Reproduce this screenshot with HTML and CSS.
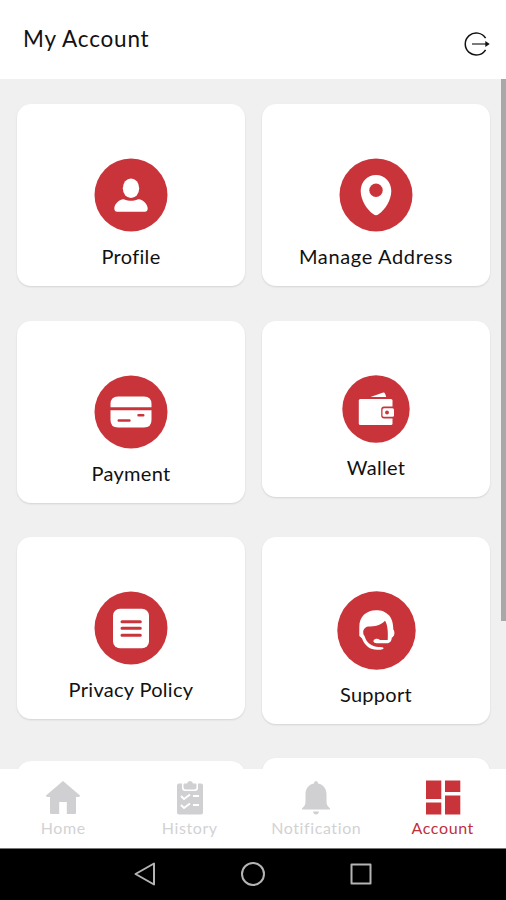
FILE: index.html
```html
<!DOCTYPE html>
<html lang="en">
<head>
  <meta charset="UTF-8">
  <meta name="viewport" content="width=device-width, initial-scale=1">
  <title>My Account</title>
  <link rel="stylesheet" href="styles.css">
</head>
<body>
  <header class="header">
    <h1>My Account</h1>
    <svg class="logout" width="28" height="28" viewBox="0 0 28 28">
      <path d="M22.6 8.2A11 11 0 1 0 22.6 19.8" fill="none" stroke="#111" stroke-width="1.5"/>
      <path d="M9 14H24" stroke="#333" stroke-width="1.3"/>
      <path d="M22.3 11L26.7 14L22.3 17Z" fill="#111"/>
    </svg>
  </header>

  <main class="content">
    <div class="grid">
      <div class="card">
        <svg width="74" height="74" viewBox="0 0 74 74">
          <circle class="disc" cx="37" cy="37" r="36.5"/>
          <ellipse cx="37" cy="30.2" rx="8.2" ry="9.8"/>
          <path d="M28.8 41.2C31 41 31.5 42.8 37 42.8S43 41 45.2 41.2C50 42.5 53.3 46 53.7 50.3Q53.7 53.8 50.7 53.8H23.3Q20.3 53.8 20.3 50.3C20.7 46 24 42.5 28.8 41.2Z"/>
        </svg>
        <span>Profile</span>
      </div>
      <div class="card">
        <svg width="74" height="74" viewBox="0 0 74 74">
          <circle class="disc" cx="37" cy="37" r="36.5"/>
          <path d="M37 17C28 17 21.7 24 21.7 33C21.7 42 28 52 34.5 56.3Q37 58 39.5 56.3C46 52 52.3 42 52.3 33C52.3 24 46 17 37 17Z"/>
          <circle class="disc" cx="37" cy="32.3" r="6.7"/>
        </svg>
        <span class="long">Manage Address</span>
      </div>

      <div class="card">
        <svg width="74" height="74" viewBox="0 0 74 74">
          <circle class="disc" cx="37" cy="37" r="36.5"/>
          <path d="M16.5 32.2V29Q16.5 21.5 24 21.5H50Q57.5 21.5 57.5 29V32.2Z"/>
          <path d="M16.5 35.3H57.5V45Q57.5 52.5 50 52.5H24Q16.5 52.5 16.5 45Z"/>
          <path class="line" d="M24.7 45.5H35.5M44.5 40.2H49.3"/>
        </svg>
        <span>Payment</span>
      </div>
      <div class="card">
        <svg width="68" height="68" viewBox="0 0 68 68">
          <circle class="disc" cx="34" cy="34" r="33.7"/>
          <path d="M28.5 22L40.5 17.7Q42.5 17 43.2 19L44.2 22Z"/>
          <rect x="16.8" y="24" width="33.7" height="26" rx="1.5"/>
          <path class="disc" d="M42 31.5H53V43.5H42Q39.2 43.5 39.2 40.5V34.5Q39.2 31.5 42 31.5Z"/>
          <rect x="40.5" y="33.2" width="11.5" height="8.6" rx="1.5"/>
          <circle class="disc" cx="45" cy="37.5" r="1.9"/>
        </svg>
        <span>Wallet</span>
      </div>

      <div class="card">
        <svg width="74" height="74" viewBox="0 0 74 74">
          <circle class="disc" cx="37" cy="37" r="36.5"/>
          <rect x="19" y="17.7" width="36" height="39.5" rx="7"/>
          <path class="line wide" d="M28 30.7H46.3M28 37.3H46.3M28 44.2H46.3"/>
        </svg>
        <span>Privacy Policy</span>
      </div>
      <div class="card">
        <svg width="79" height="79" viewBox="0 0 79 79">
          <circle class="disc" cx="39.5" cy="39.5" r="39.2"/>
          <path d="M39 19.3C29 19.3 22.3 26 22.3 36V45Q24 46 25 47.500C28 55 33 58.800 40 58.800C43.500 58.800 46.500 58.300 46.500 57.200C46.500 56 44.500 56.200 42 56C34 55.500 29.500 51.500 27.500 45Q25.800 43.500 26.200 40Q27.500 36 31 35.500C38 35.500 43 34.500 48 29.700C50.500 33 51.300 41 50.700 49H43Q41.500 47.600 39 47.800Q36.300 48.300 36.300 50.300Q37 52.500 40 52.300H50C53 52.300 54.500 50 54.800 46.800C58 45 58 40.500 56.300 38.500C56.300 32 54.500 26 51 23.500C48 20.800 45 19.300 39 19.300Z"/>
        </svg>
        <span>Support</span>
      </div>

      <div class="card low"></div>
      <div class="card"></div>
    </div>
    <div class="scrollbar"></div>
  </main>

  <nav class="tabs">
    <a class="tab">
      <svg width="36" height="36" viewBox="0 0 36 36">
        <path d="M18 1L35 15.5Q35 17.5 32 17H31V33Q31 34 30 34H21.8V22H14.2V34H6Q5 34 5 33V17H4Q1 17.5 1 15.5Z"/>
      </svg>
      <span>Home</span>
    </a>
    <a class="tab">
      <svg width="36" height="36" viewBox="0 0 36 36">
        <path d="M7 3.5H10V8Q10 11 13 11H23Q26 11 26 8V3.5H29Q31 3.5 31 5.5V32.5Q31 34.5 29 34.5H7Q5 34.5 5 32.5V5.5Q5 3.5 7 3.5Z"/>
        <path d="M11.5 4.5Q11.5 3.5 12.5 3.5H15Q15.5 1 18 1T21 3.5H23.5Q24.5 3.5 24.5 4.5V7Q24.5 9.500 22 9.500H14Q11.500 9.500 11.500 7Z"/>
        <path class="check" d="M9 16L12 19L18 14.5M21 16H27M9 25L12 28L18 23.5M21 25H27"/>
      </svg>
      <span>History</span>
    </a>
    <a class="tab">
      <svg width="36" height="36" viewBox="0 0 36 36">
        <path d="M18 1Q20 1 20 3.5C25.5 4.5 28.5 9 28.5 14V22C28.5 25 30 26.5 32 28.5V29.5H4V28.5C6 26.5 7.5 25 7.5 22V14C7.5 9 10.5 4.5 16 3.5Q16 1 18 1ZM15 31.5H21Q20.5 34.5 18 34.5T15 31.5Z"/>
      </svg>
      <span>Notification</span>
    </a>
    <a class="tab active">
      <svg width="36" height="36" viewBox="0 0 36 36">
        <path d="M1 0.5H16.3V19H1ZM20 0.5H35.3V12H20ZM1 22.5H16.3V34.5H1ZM20 15.5H35.3V34.5H20Z"/>
      </svg>
      <span>Account</span>
    </a>
  </nav>

  <footer class="system-bar">
    <svg width="24" height="26" viewBox="0 0 24 26"><path d="M21 2.5V23.5L2.5 13Z"/></svg>
    <svg width="24" height="26" viewBox="0 0 24 26"><circle cx="12" cy="13" r="11"/></svg>
    <svg width="24" height="26" viewBox="0 0 24 26"><rect x="2.5" y="3.5" width="19" height="19"/></svg>
  </footer>
</body>
</html>
```

FILE: styles.css
```css
* {
  box-sizing: border-box;
}
body {
  margin: 0;
  height: 900px;
  display: flex;
  flex-direction: column;
  overflow: hidden;
  background: #fff;
  color: #111;
  font-family: Lato, "Open Sans", sans-serif;
}
svg {
  display: block;
  flex: none;
}
.header {
  height: 79px;
  flex: none;
  display: flex;
  justify-content: space-between;
  padding: 26px 15px 0 23px;
}
.header h1 {
  margin: 0;
  font-size: 22.5px;
  line-height: 26px;
  font-weight: 400;
  letter-spacing: 0.8px;
}
.logout {
  margin-top: 4px;
}
.content {
  position: relative;
  height: 690px;
  flex: none;
  overflow: hidden;
  background: #f0f0f0;
}
.grid {
  display: grid;
  grid-template-columns: 228px 228px;
  grid-template-rows: 183px 182px 187px 183px;
  column-gap: 17px;
  row-gap: 34px;
  align-items: start;
  padding: 25px 17px;
}
.card {
  display: flex;
  flex-direction: column;
  align-items: center;
  min-height: 60px;
  padding: 54px 0 16px;
  border-radius: 14px;
  background: #fff;
  box-shadow: 0 1px 2px rgba(0, 0, 0, 0.12);
}
.card.low {
  margin-top: 3px;
}
.card svg {
  fill: #fff;
}
.card .disc {
  fill: #c9343b;
}
.card .line {
  fill: none;
  stroke: #c9343b;
  stroke-width: 2.4;
  stroke-linecap: round;
}
.card .wide {
  stroke-width: 3;
}
.card span {
  margin-top: 11px;
  margin-bottom: 1px;
  font-size: 20px;
  line-height: 26px;
  letter-spacing: 0.3px;
}
.card .long {
  letter-spacing: 0.65px;
}
.scrollbar {
  position: absolute;
  top: 0;
  right: 0;
  width: 5px;
  height: 542px;
  background: #a8a8a8;
}
.tabs {
  height: 79px;
  flex: none;
  display: flex;
  padding-top: 11px;
  background: #fff;
}
.tab {
  flex: 1;
  display: flex;
  flex-direction: column;
  align-items: center;
  color: #d2d2d4;
  fill: #d0d0d2;
}
.tab span {
  margin-top: 2px;
  font-size: 16px;
  line-height: 20px;
  letter-spacing: 0.6px;
}
.tab .check {
  fill: none;
  stroke: #fff;
  stroke-width: 2;
}
.tab.active {
  color: #c0303c;
  fill: #c9343b;
}
.system-bar {
  height: 52px;
  flex: none;
  display: flex;
  justify-content: center;
  align-items: center;
  gap: 84px;
  padding-bottom: 1px;
  background: #000;
  border-top: 1px solid #777;
}
.system-bar svg {
  fill: none;
  stroke: #b4b4b4;
  stroke-width: 2;
  stroke-linejoin: round;
}
```
